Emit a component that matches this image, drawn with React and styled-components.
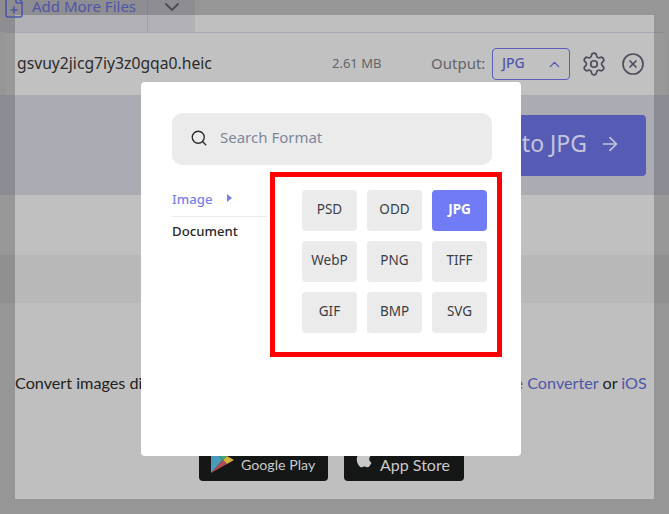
import React from "react";
import styled, { createGlobalStyle } from "styled-components";
import { ArrowRight, ChevronDown, ChevronUp, CircleX, FilePlus, Search, Settings } from "lucide-react";

const FORMATS = ["PSD", "ODD", "JPG", "WebP", "PNG", "TIFF", "GIF", "BMP", "SVG"];

const App = () => {
  return (
    <Page>
      <GlobalStyle />
      <Backdrop />

      <TopBar>
        <AddFiles>
          <AddIcon size={24} strokeWidth={1.6} />
          <AddLabel>Add More Files</AddLabel>
        </AddFiles>
        <AddToggle>
          <ChevronDown size={24} strokeWidth={2} color="#4d4f5c" />
        </AddToggle>
      </TopBar>

      <FileRow>
        <FileName>gsvuy2jicg7iy3z0gqa0.heic</FileName>
        <FileSize>2.61 MB</FileSize>
        <OutputLabel>Output:</OutputLabel>
        <OutputSelect>
          <OutputValue>JPG</OutputValue>
          <ChevronUp size={17} strokeWidth={1.8} />
        </OutputSelect>
        <GearIcon size={26} strokeWidth={1.6} />
        <CloseIcon size={24} strokeWidth={1.7} />
      </FileRow>

      <ActionBand>
        <ConvertButton>
          <ConvertLabel>Convert to JPG</ConvertLabel>
          <ArrowRight size={22} strokeWidth={1.8} />
        </ConvertButton>
      </ActionBand>

      <Band $height={60} $tint="rgba(255,255,255,0.02)" />
      <Band $height={48} $tint="rgba(0,0,0,0.035)" />

      <Promo>
        <PromoText>
          Convert images directly on your phone or tablet with our Android{" "}
          <PromoLink>Image Converter</PromoLink> or <PromoLink>iOS</PromoLink>
        </PromoText>
        <Stores>
          <StoreButton $width={129}>
            <svg width="23" height="26" viewBox="0 0 23 26">
              <path d="M0 0 12 13 0 26z" fill="#4a9bb8" />
              <path d="M0 0 16 9 12 13z" fill="#3fa878" />
              <path d="M0 26 16 17 12 13z" fill="#b54a50" />
              <path d="M16 9 23 13 16 17 12 13z" fill="#d1b23c" />
            </svg>
            <StoreLabel $size={14.2}>Google Play</StoreLabel>
          </StoreButton>
          <StoreButton $width={120}>
            <svg width="17" height="22" viewBox="0 0 22 28">
              <path
                d="M15.500 1c.2 2-1.700 4.500-4.100 4.400C11.100 3.300 13.300 1.100 15.500 1zM20 20c-1 2.400-3 6-5.200 6-1.500 0-2-1-3.800-1s-2.400 1-3.800 1C4.500 26 1 20.500 1 15.500 1 11 3.900 8.500 6.700 8.500c1.700 0 3 1.100 4.200 1.100 1.100 0 2.600-1.300 4.500-1.100 1.300.1 3 .6 4.200 2.300-3.600 2.300-3 7.500.4 9.200z"
                fill="#c9c9c9"
              />
            </svg>
            <StoreLabel $size={16}>App Store</StoreLabel>
          </StoreButton>
        </Stores>
      </Promo>

      <Modal>
        <SearchBox>
          <SearchIcon size={18} strokeWidth={1.8} />
          <SearchText>Search Format</SearchText>
        </SearchBox>
        <ModalBody>
          <Sidebar>
            <CategoryActive>
              Image
              <Caret />
            </CategoryActive>
            <Category>Document</Category>
          </Sidebar>
          <FormatFrame>
            <FormatGrid>
              {FORMATS.map((name) => (
                <FormatTile key={name} $active={name === "JPG"}>
                  {name}
                </FormatTile>
              ))}
            </FormatGrid>
          </FormatFrame>
        </ModalBody>
      </Modal>
    </Page>
  );
};

const GlobalStyle = createGlobalStyle`
  html, body {
    margin: 0;
    height: 100%;
    overflow: hidden;
  }

  body {
    font-family: "Noto Sans", "Liberation Sans", sans-serif;
    background: #969696;
  }
`;

const Page = styled.div`
  position: relative;
  width: 669px;
  height: 514px;
  overflow: hidden;
  background: #969696;
  display: flex;
  flex-direction: column;
`;

const Backdrop = styled.div`
  position: absolute;
  left: 15px;
  top: 15px;
  width: 639px;
  height: 484px;
  background: #bfbfbf;
`;

const TopBar = styled.div`
  position: relative;
  height: 32px;
  flex: none;
  display: flex;
`;

const AddFiles = styled.div`
  width: 147px;
  display: flex;
  align-items: flex-start;
  background: rgba(90, 95, 130, 0.14);
  border-right: 1px solid rgba(80, 80, 100, 0.16);
`;

const AddIcon = styled(FilePlus)`
  color: #5056a8;
  margin: -5px 0 0 2px;
`;

const AddLabel = styled.span`
  margin-left: 6px;
  font-size: 15px;
  line-height: 13px;
  color: #5056a8;
`;

const AddToggle = styled.div`
  width: 47px;
  display: flex;
  justify-content: center;
  align-items: flex-start;
  background: rgba(90, 95, 130, 0.14);

  svg {
    margin-top: -5px;
  }
`;

const FileRow = styled.div`
  position: relative;
  flex: none;
  height: 63px;
  width: 660px;
  margin-left: 5px;
  box-sizing: border-box;
  display: flex;
  align-items: center;
  padding-left: 12px;
  border-top: 1px solid rgba(110, 110, 150, 0.3);
  background: rgba(255, 255, 255, 0.03);
`;

const FileName = styled.span`
  width: 315px;
  padding-bottom: 2px;
  font-size: 15.700px;
  color: #2b2b2b;
`;

const FileSize = styled.span`
  width: 99px;
  padding-bottom: 2px;
  font-size: 13px;
  color: #62646b;
`;

const OutputLabel = styled.span`
  width: 61px;
  padding-bottom: 2px;
  font-size: 15px;
  color: #62646b;
`;

const OutputSelect = styled.div`
  width: 78px;
  height: 32px;
  box-sizing: border-box;
  display: flex;
  align-items: center;
  justify-content: space-between;
  padding: 0 6px 0 9px;
  border: 1px solid #5a60b8;
  border-radius: 4px;
  color: #5056a8;
`;

const OutputValue = styled.span`
  padding-bottom: 3px;
  font-size: 14px;
  font-weight: 500;
`;

const GearIcon = styled(Settings)`
  color: #4d4f5c;
  margin-left: 11px;
`;

const CloseIcon = styled(CircleX)`
  color: #4d4f5c;
  margin-left: 14px;
`;

const ActionBand = styled.div`
  position: relative;
  flex: none;
  height: 100px;
  box-sizing: border-box;
  display: flex;
  justify-content: flex-end;
  align-items: flex-start;
  padding: 20px 23px 0 0;
  background: rgba(95, 95, 135, 0.2);
`;

const ConvertButton = styled.div`
  width: 280px;
  height: 61px;
  box-sizing: border-box;
  display: flex;
  align-items: center;
  justify-content: flex-end;
  gap: 12px;
  padding-right: 25px;
  border-radius: 4px;
  background: #565cb5;
  color: #c4c5dc;

  svg {
    margin-bottom: 3px;
  }
`;

const ConvertLabel = styled.span`
  padding-bottom: 6px;
  font-size: 23px;
`;

const Band = styled.div`
  position: relative;
  flex: none;
  height: ${(props) => props.$height}px;
  background: ${(props) => props.$tint};
`;

const Promo = styled.div`
  position: relative;
  flex: 1;
  display: flex;
  flex-direction: column;
  padding-top: 70px;
`;

const PromoText = styled.div`
  margin-left: 15px;
  white-space: nowrap;
  font-family: "Lato", "Liberation Sans", sans-serif;
  font-size: 16.200px;
  line-height: 20px;
  color: #222;
`;

const PromoLink = styled.span`
  color: #5056a8;
`;

const Stores = styled.div`
  display: flex;
  gap: 16px;
  margin: 47px 0 0 199px;
`;

const StoreButton = styled.div`
  width: ${(props) => props.$width}px;
  height: 41px;
  box-sizing: border-box;
  display: flex;
  align-items: flex-start;
  gap: 7px;
  padding: 7px 0 0 12px;
  border-radius: 4px;
  background: #151616;
`;

const StoreLabel = styled.span`
  margin-top: 8px;
  line-height: 20px;
  font-family: "Lato", "Liberation Sans", sans-serif;
  font-size: ${(props) => props.$size}px;
  color: #c9c9c9;
`;

const Modal = styled.div`
  position: absolute;
  left: 141px;
  top: 82px;
  width: 380px;
  height: 374px;
  box-sizing: border-box;
  padding: 31px 19px 0 31px;
  background: #fff;
  border-radius: 4px;
`;

const SearchBox = styled.div`
  width: 320px;
  height: 52px;
  box-sizing: border-box;
  display: flex;
  align-items: center;
  gap: 12px;
  padding-left: 18px;
  border-radius: 10px;
  background: #ebebeb;
`;

const SearchIcon = styled(Search)`
  color: #2b2b2b;
  margin-bottom: 2px;
`;

const SearchText = styled.span`
  padding-bottom: 4px;
  font-size: 15px;
  color: #7d879c;
`;

const ModalBody = styled.div`
  display: flex;
  margin-top: 7px;
`;

const Sidebar = styled.div`
  width: 95px;
  margin-right: 3px;
  padding-top: 18px;
  font-size: 13.200px;
  font-weight: 500;
`;

const CategoryActive = styled.div`
  height: 26px;
  display: flex;
  align-items: flex-start;
  line-height: 18px;
  gap: 15px;
  color: #7a80e8;
  border-bottom: 1px solid #ebebeb;
`;

const Caret = styled.span`
  width: 0;
  height: 0;
  margin-top: 4px;
  border-left: 5px solid #7a80e8;
  border-top: 4.500px solid transparent;
  border-bottom: 4.500px solid transparent;
`;

const Category = styled.div`
  margin-top: 5px;
  line-height: 18px;
  color: #2b2b2b;
`;

const FormatFrame = styled.div`
  width: 232px;
  height: 185px;
  box-sizing: border-box;
  padding: 13px 0 0 27px;
  border: 5px solid #f00;
`;

const FormatGrid = styled.div`
  display: grid;
  grid-template-columns: repeat(3, 55px);
  grid-auto-rows: 41px;
  gap: 10px;
`;

const FormatTile = styled.div`
  display: flex;
  align-items: center;
  justify-content: center;
  padding-bottom: 4px;
  border-radius: 4px;
  font-size: 13.500px;
  font-weight: ${(props) => (props.$active ? 700 : 400)};
  color: ${(props) => (props.$active ? "#fff" : "#3a3d45")};
  background: ${(props) => (props.$active ? "#717bf5" : "#ebebeb")};
`;

export default App;
